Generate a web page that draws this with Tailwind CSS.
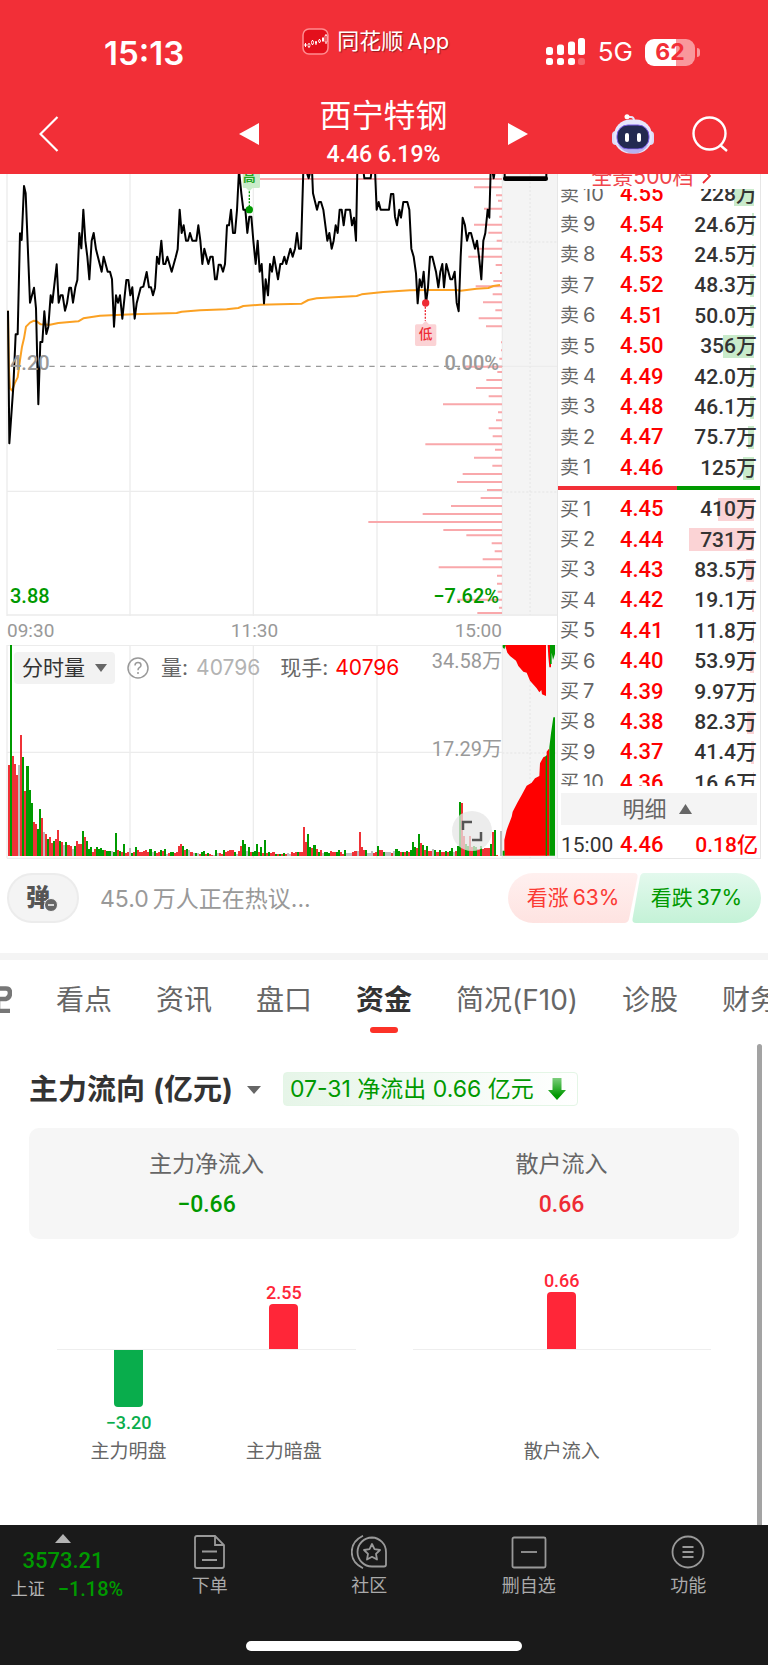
<!DOCTYPE html>
<html lang="zh-CN">
<head>
<meta charset="utf-8">
<meta name="viewport" content="width=device-width, initial-scale=1">
<title>西宁特钢 4.46 6.19%</title>
<script src="https://cdn.jsdelivr.net/npm/@tailwindcss/browser@4"></script>
</head>
<body class="bg-white text-[#333] font-['Inter','Noto_Sans_CJK_SC',sans-serif]">
<div class="relative flex min-h-screen flex-col overflow-hidden">

<!-- Header -->
<header class="bg-[#f22f37] text-white">
  <div class="flex h-[88px] pl-[104px] pr-[68px]">
    <div class="mt-[33px] text-[33px] leading-10 font-semibold">15:13</div>
    <div class="mt-[25px] ml-[118px] flex h-8 items-center gap-2">
      <svg class="size-[27px]" viewBox="0 0 27 27" fill="none"><rect x="1" y="1" width="25" height="25" rx="6" fill="#e4101c" stroke="#ff8c90" stroke-width="1.5"/><path d="M3.5 15v4M7 15v5M10.500 12v5M14 13v4M17.500 11v4M21 9v5M24 6v10" stroke="#fff" stroke-width="1"/><path d="M2.500 16h2v2h-2zM13 13.500h2v2h-2zM20 10h2v3h-2z" fill="#fff"/><path d="M6 16h2v2.500H6zM9.500 13h2v3h-2zM16.500 12h2v2h-2zM23 7.500h2v6.500h-2z" fill="#e4101c" stroke="#fff" stroke-width=".7"/></svg>
      <span class="text-[22px] leading-8 text-shadow-[1px_1px_1px_rgba(0,0,0,0.4)]">同花顺<span class="ml-1">App</span></span>
    </div>
    <div class="mt-8 ml-auto flex h-10 items-center gap-[12px]">
      <svg class="h-7 w-[40px]" viewBox="0 0 40 28" fill="#fff"><rect x="0" y="9" width="7" height="8" rx="2.500"/><rect x="11" y="6.500" width="7" height="10.500" rx="2.500"/><rect x="22" y="3.500" width="7" height="13.500" rx="2.500"/><rect x="32" y="0" width="7" height="17" rx="2.500"/><rect x="0" y="20" width="7" height="7" rx="2.500"/><rect x="11" y="20" width="7" height="7" rx="2.500"/><rect x="22" y="20" width="7" height="7" rx="2.500"/><rect x="32" y="20" width="7" height="7" rx="2.500" opacity=".25"/></svg>
      <span class="text-[26px] leading-8">5G</span>
      <div class="flex items-center gap-[2px]">
        <div class="flex h-[27px] w-[50px] items-center justify-center rounded-[9px] bg-linear-to-r from-white from-62% to-[#f9989c] to-62% text-[23px] leading-[27px] font-bold text-[#f22f37]">62</div>
        <div class="h-[9px] w-[3px] rounded-r-full bg-[#f9989c]"></div>
      </div>
    </div>
  </div>
  <nav class="grid h-[86px] grid-cols-[1fr_auto_1fr] items-center pt-[6px] pr-[40px] pb-[1px] pl-[39px]">
    <button aria-label="返回" class="justify-self-start"><svg class="h-[36px] w-5" viewBox="0 0 20 36" fill="none" stroke="#fff" stroke-width="2.200"><path d="M18.500 1 1.500 18l17 17"/></svg></button>
    <div class="flex items-center gap-[60px]">
      <button aria-label="上一只"><svg class="h-[22px] w-5" viewBox="0 0 20 22" fill="#fff"><path d="M0 11 20 0v22z"/></svg></button>
      <div class="text-center">
        <h1 class="text-[32px] leading-[42px]">西宁特钢</h1>
        <p class="font-['Roboto',sans-serif] text-[23px] leading-[36px] font-medium">4.46 6.19%</p>
      </div>
      <button aria-label="下一只"><svg class="h-[22px] w-5" viewBox="0 0 20 22" fill="#fff"><path d="M20 11 0 0v22z"/></svg></button>
    </div>
    <div class="flex items-center gap-[37px] justify-self-end">
      <button aria-label="智能助手"><svg class="h-[40px] w-[44px]" viewBox="0 0 44 40"><path d="M16 3h4q3 0 3 4" fill="none" stroke="#e6e6fa" stroke-width="2"/><circle cx="16" cy="2.800" r="2.500" fill="#fff"/><rect x="1" y="17" width="8" height="14" rx="4" fill="#dcdcf6"/><rect x="35" y="17" width="8" height="14" rx="4" fill="#dcdcf6"/><rect x="3" y="5.500" width="38" height="34" rx="16" fill="#e7e6fb"/><path d="M6 30q6 9 16 9.500T38 30q-6 6-16 6T6 30z" fill="#b7b2ee"/><rect x="6" y="11" width="32" height="24" rx="11" fill="#232950" stroke="#7c5ce6" stroke-width="1"/><rect x="14" y="19" width="4" height="9" rx="2" fill="#fff"/><rect x="26" y="19" width="4" height="9" rx="2" fill="#fff"/></svg></button>
      <button aria-label="搜索"><svg class="size-9" viewBox="0 0 36 36" fill="none" stroke="#fff" stroke-width="2.400"><circle cx="17.500" cy="17.500" r="16"/><path d="m28 29 7 6"/></svg></button>
    </div>
  </nav>
</header>

<!-- Quote area -->
<section class="flex h-[685px]">
  <div class="flex min-w-0 flex-1 flex-col">
    <div class="relative h-[442px] font-['Roboto',sans-serif] text-[20px] leading-6 font-medium">
      <svg class="h-full w-full" viewBox="0 12 1671 1326" preserveAspectRatio="none" fill="none">
        <rect x="1509" y="12" width="162" height="1326" fill="#f4f4f4"/>
        <path d="M21 12V1338M390 12V1338M760 12V1338M1131 12V1338M1507 12V1338M21 214H1507M1507 589H1671M21 964H1507M21 1335H1671" stroke="#ececec" stroke-width="4"/>
        <path d="M1590 12V1335M1507 216H1671M1507 966H1671" stroke="#e9e9e9" stroke-width="4" stroke-dasharray="6 6"/>
        <path d="M148 589H1507" stroke="#999" stroke-width="3.500" stroke-dasharray="16 16"/>
        <path stroke="#f9a8ab" stroke-width="6" d="M765 27H1506M1422 52H1506M1488 76H1506M1494 92H1506M1452 116H1506M1498 140H1506M1422 164H1506M1465 188H1506M1490 212H1506M1430 236H1506M1405 260H1506M1487 285H1506M1500 309H1506M1480 333H1506M1427 349H1506M1478 373H1506M1449 397H1506M1486 421H1506M1436 445H1506M1458 469H1506M1503 517H1506M1503 541H1506M1498 566H1506M1393 590H1506M1492 606H1506M1459 630H1506M1428 654H1506M1466 679H1506M1329 703H1506M1494 727H1506M1488 751H1506M1466 775H1506M1478 799H1506M1276 823H1506M1485 839H1506M1422 863H1506M1477 887H1506M1388 912H1506M1371 936H1506M1461 960H1506M1442 984H1506M1353 1008H1506M1268 1032H1506M1105 1056H1506M1330 1080H1506M1399 1096H1506M1475 1120H1506M1484 1144H1506M1448 1168H1506M1316 1192H1506M1491 1217H1506M1491 1241H1506M1493 1265H1506M1371 1289H1506M1497 1313H1506M1432 1329H1506"/>
        <polyline stroke="#fba123" stroke-width="6" stroke-linejoin="round" points="24,422 27,600 30,655 36,662 44,640 53,622 60,570 66,530 72,505 78,470 90,458 102,452 110,454 122,463 150,464 175,459 235,454 250,445 300,437 400,433 530,429 545,425 600,421 680,418 715,414 730,408 780,404 840,403 905,401 925,390 950,385 1070,378 1085,373 1150,366 1230,361 1290,360 1370,360 1382,362 1430,356 1465,354 1480,348 1500,345"/>
        <polyline stroke="#000" stroke-width="6" stroke-linejoin="round" points="24,422 28,820 40,650 47,493 53,493 60,190 65,210 72,48 77,70 90,398 102,353 108,415 115,703 121,516 127,516 133,424 139,492 145,470 152,376 157,398 170,283 176,398 182,376 188,376 195,422 201,400 208,353 213,353 219,398 226,352 232,330 238,189 244,235 250,119 256,212 262,260 268,328 275,212 281,189 288,238 305,305 311,260 323,305 330,305 336,328 342,470 348,376 354,398 360,376 367,446 379,330 385,330 391,376 397,352 404,446 410,400 422,353 430,350 440,306 447,352 453,352 459,376 465,353 471,260 477,282 484,212 490,282 496,282 502,260 515,305 527,262 533,238 539,119 545,189 551,166 558,212 564,212 570,189 577,212 589,212 595,166 601,212 607,282 613,236 625,282 631,260 638,260 645,328 650,328 656,284 662,284 669,305 675,282 681,166 687,166 693,119 699,189 705,189 711,120 717,0 724,70 730,119 736,119 742,189 748,140 754,140 760,212 767,282 773,212 779,305 785,282 792,400 797,328 804,376 810,282 816,305 822,260 834,328 841,282 847,282 853,260 859,282 871,236 878,260 885,236 891,189 897,236 903,236 910,0 918,0 926,25 932,0 936,0 939,70 951,119 957,96 963,96 970,119 982,212 988,189 995,236 1001,212 1007,166 1013,189 1019,119 1025,119 1031,166 1037,119 1050,119 1056,166 1062,143 1068,212 1072,0 1090,0 1093,25 1112,25 1115,0 1125,0 1130,119 1136,96 1142,119 1167,119 1173,72 1180,72 1185,140 1191,166 1198,119 1203,143 1210,96 1222,96 1228,119 1234,236 1241,260 1248,310 1253,400 1259,328 1265,352 1271,305 1278,400 1284,352 1290,260 1297,260 1308,305 1315,352 1321,305 1327,282 1332,352 1339,282 1351,328 1357,328 1364,305 1370,398 1376,424 1382,260 1388,143 1395,166 1401,212 1407,189 1413,189 1419,212 1425,236 1431,212 1437,260 1444,328 1450,212 1456,189 1463,119 1468,143 1472,0 1477,0 1481,25 1485,0"/>
        <path d="M1514 0V26H1639V0" stroke="#000" stroke-width="6"/><path d="M1516 26H1637" stroke="#000" stroke-width="14" stroke-linecap="round"/>
        <path d="M728 0H780V50Q780 54 776 54H758L748 64L738 54H732Q728 54 728 50Z" fill="#c9ecc9"/>
        <path d="M748 64V110" stroke="#090" stroke-width="4" stroke-dasharray="6 4"/><circle cx="748" cy="119" r="11" fill="#090"/>
        <text x="748" y="34" text-anchor="middle" font-size="38" font-weight="700" fill="#1fa51f" font-family="Noto Sans CJK SC">高</text>
        <path d="M1276 410V452" stroke="#ee2b34" stroke-width="4" stroke-dasharray="6 4"/><circle cx="1277" cy="399" r="11" fill="#ee2b34"/>
        <path d="M1267 463 1277 452 1287 463H1305Q1309 463 1309 468V523Q1309 528 1304 528H1250Q1245 528 1245 523V468Q1245 463 1250 463Z" fill="#fbd3d5"/>
        <text x="1277" y="508" text-anchor="middle" font-size="41" font-weight="500" fill="#ee2b34" font-family="Noto Sans CJK SC">低</text>
      </svg>
      <span class="absolute top-[177px] left-[10px] text-[#999]">4.20</span>
      <span class="absolute top-[177px] right-[58px] text-[#999]">0.00%</span>
      <span class="absolute top-[410px] left-[10px] text-[#090]">3.88</span>
      <span class="absolute top-[410px] right-[58px] text-[#090]">−7.62%</span>
    </div>
    <div class="flex h-[29px] items-center justify-between pr-[55px] pl-[7px] font-['Roboto',sans-serif] text-[19px] leading-6 text-[#999]">
      <span>09:30</span><span>11:30</span><span>15:00</span>
    </div>
    <div class="relative h-[214px]">
      <svg class="h-full w-full" viewBox="0 15 1671 642" preserveAspectRatio="none" fill="none">
        <rect x="1509" y="15" width="162" height="638" fill="#f4f4f4"/>
        <path d="M21 16H1671M21 15V655M390 15V655M760 15V655M1131 15V655M1507 15V655M21 337H1507M21 655H1671" stroke="#ececec" stroke-width="4"/>
        <path d="M1590 15V655M1507 339H1671" stroke="#e9e9e9" stroke-width="4" stroke-dasharray="6 6"/>
        <g id="volume" shape-rendering="crispEdges"></g>
        <path fill="#f00" d="M1515 15 1522 38 1530 48 1548 62 1555 78 1570 95 1580 98 1590 122 1610 145 1618 157 1624 150 1626 163 1638 168V15ZM1643 15 1645 50 1648 82H1653V15Z"/>
        <path fill="#090" d="M1508 15H1517L1513 28 1508 22ZM1650 15 1650 72H1655V38L1659 60 1665 42V15Z"/>
        <path fill="#f00" d="M1513 647V600L1520 570 1535 530 1538 515 1552 488 1565 465 1580 437 1595 428 1605 415 1618 408 1620 370 1630 352 1640 347V335L1648 325V647Z"/>
        <path fill="#090" d="M1637 349 1641 345V647H1637ZM1648 322 1653 280 1660 232H1665V647H1648ZM1508 632H1514V647H1508Z"/>
      </svg>
      <div class="absolute top-[7px] left-[14px] flex h-8 items-center text-[21px] leading-8 whitespace-nowrap">
        <button class="flex h-8 items-center gap-[10px] rounded-[4px] bg-[#f2f2f2] px-[8px]">分时量<svg class="h-2 w-3" viewBox="0 0 12 8" fill="#666"><path d="M0 0h12L6 8z"/></svg></button>
        <button aria-label="说明" class="ml-[12px]"><svg class="size-[22px]" viewBox="0 0 22 22" fill="none" stroke="#999" stroke-width="1.500"><circle cx="11" cy="11" r="10"/><path d="M8 8.500q0-3 3-3t3 2.700q0 1.500-1.700 2.500-1.300.9-1.300 2.500"/><path d="M11 15v2"/></svg></button>
        <span class="ml-[12px] text-[#666]">量:</span><span class="ml-[8px] text-[#b3b3b3]">40796</span>
        <span class="ml-[20px] text-[#666]">现手:</span><span class="ml-[7px] text-[#f00]">40796</span>
      </div>
      <span class="absolute top-[4px] right-[55px] font-['Roboto','Noto_Sans_CJK_SC',sans-serif] text-[20px] leading-6 text-[#999]">34.58万</span>
      <span class="absolute top-[92px] right-[55px] font-['Roboto','Noto_Sans_CJK_SC',sans-serif] text-[20px] leading-6 text-[#999]">17.29万</span>
      <button aria-label="全屏" class="absolute right-[65px] bottom-[8px] flex size-10 items-center justify-center rounded-full bg-[#e6e6e6]/75"><svg class="size-[22px]" viewBox="0 0 22 22" fill="none" stroke="#555" stroke-width="2.500"><path d="M2 10V2h9M20 12v8h-9"/></svg></button>
    </div>
  </div>

  <!-- Order book -->
  <div class="flex w-[211px] flex-col pr-[7px]">
    <div class="flex flex-1 flex-col border-x border-b border-[#e6e6e6]">
      <a href="#depth" class="flex h-[15px] items-end justify-center gap-2 overflow-hidden pr-4 text-[21px] leading-[25px] text-[#f0454c]"><span>全景500档</span><svg class="mb-[5px] h-[16px] w-[9px] shrink-0" viewBox="0 0 9 16" fill="none" stroke="#ee2b34" stroke-width="1.800"><path d="m1 1 7 7-7 7"/></svg></a>
      <div class="flex h-[294px] flex-col justify-end overflow-hidden">
        <table class="h-[304px] w-full shrink-0 table-fixed"><tbody id="asks"></tbody></table>
      </div>
      <div class="mt-[3px] flex h-[4px]"><div class="w-[59%] bg-[#f22f37]"></div><div class="flex-1 bg-[#090]"></div></div>
      <div class="mt-[4px] h-[292px] overflow-hidden">
        <table class="h-[304px] w-full table-fixed"><tbody id="bids"></tbody></table>
      </div>
      <button class="mx-[3px] mt-[7px] flex h-8 items-center justify-center gap-3 bg-[#f4f4f4] pr-1 text-[22px] leading-8 text-[#666]">明细<svg class="h-[10px] w-[13px]" viewBox="0 0 13 10" fill="#666"><path d="M6.500 0 13 10H0z"/></svg></button>
      <div class="flex flex-1 items-center pt-[6px] pr-[2px] pl-[3px] font-['Roboto','Noto_Sans_CJK_SC',sans-serif] text-[22px] leading-6 font-medium"><span class="w-[59px] text-[21px] font-normal">15:00</span><span class="text-[#f00]">4.46</span><span class="ml-auto text-[21px] text-[#f00]">0.18亿</span></div>
    </div>
  </div>
</section>

<!-- Discussion -->
<section class="flex h-[94px] items-start px-[7px] pt-[14px]">
  <button aria-label="弹幕" class="relative flex h-[50px] w-[72px] items-center justify-center rounded-full border-2 border-[#ececec] bg-[#f4f4f4] pr-[10px] text-[24px] leading-8 font-black text-[#555]">弹<svg class="absolute right-[19px] bottom-[9px] size-[14px]" viewBox="0 0 14 14"><circle cx="7" cy="7" r="6.500" fill="#666" stroke="#f4f4f4"/><path d="M4 7h6" stroke="#fff" stroke-width="1.500"/></svg></button>
  <a href="#discuss" class="ml-[21px] text-[23px] leading-[52px] text-[#999]">45.0<span class="ml-1">万人正在热议...</span></a>
  <div class="ml-auto flex text-[21px] leading-[50px]">
    <button class="relative h-[50px] w-[130px] text-[#fb3a34]"><svg class="absolute inset-0 h-full w-full" viewBox="0 0 130 50"><defs><linearGradient id="up" x2="0" y2="1"><stop stop-color="#fff0ef"/><stop offset="1" stop-color="#fee3e1"/></linearGradient></defs><path d="M25 0H126Q130 0 129.500 4L121 46Q120 50 116 50H25A25 25 0 0 1 25 0Z" fill="url(#up)"/></svg><span class="relative">看涨<span class="ml-1">63%</span></span></button>
    <button class="relative -ml-[6px] h-[50px] w-[129px] text-[#090]"><svg class="absolute inset-0 h-full w-full" viewBox="0 0 129 50"><defs><linearGradient id="down" x2="0" y2="1"><stop stop-color="#e3f9ed"/><stop offset="1" stop-color="#c4f2d7"/></linearGradient></defs><path d="M12 0H104A25 25 0 0 1 104 50H4Q0 50 .5 46L8 4Q9 0 12 0Z" fill="url(#down)"/></svg><span class="relative">看跌<span class="ml-1">37%</span></span></button>
  </div>
</section>
<div class="h-[7px] bg-[#f4f4f4]"></div>

<!-- Tabs -->
<nav class="flex h-[76px] items-start gap-11 overflow-hidden pt-[19px] text-[28px] leading-[42px] whitespace-nowrap text-[#666]">
  <svg class="mt-[7px] h-[27px] w-3 shrink-0" viewBox="0 0 12 27" fill="none" stroke="#777" stroke-width="4.500"><path d="M-4 2.500H6Q10 2.500 10 7t-4 6H-2V25H10"/></svg>
  <a href="#views">看点</a><a href="#news">资讯</a><a href="#tape">盘口</a>
  <a href="#funds" aria-current="page" class="flex flex-col items-center font-bold text-[#333]">资金<span class="mt-[6px] h-[6px] w-[28px] rounded-[3px] bg-[#fc3228]"></span></a>
  <a href="#f10">简况(F10)</a><a href="#diagnosis">诊股</a><a href="#finance">财务</a>
</nav>

<!-- Capital flow -->
<main class="relative flex-1 pt-[36px]">
  <div class="absolute top-2 right-[6px] bottom-0 w-[5px] rounded-t-full bg-[#a3a3a3]"></div>
  <div class="flex h-[34px] items-center pl-[29px] whitespace-nowrap">
    <button class="flex items-center gap-[14px] pt-[2px] text-[29px] leading-[34px] font-bold"><span>主力流向<span class="ml-2">(亿元)</span></span><svg class="h-2 w-[14px]" viewBox="0 0 14 8" fill="#666"><path d="M0 0h14L7 8z"/></svg></button>
    <div class="ml-[22px] flex h-[34px] items-center gap-[14px] rounded-[4px] border border-[#e4f6e6] bg-linear-to-r from-[#e6f5e8] to-white pr-[11px] pl-[6px] text-[23px] leading-8 text-[#090]">07-31 净流出 0.66 亿元<svg class="h-[22px] w-[18px]" viewBox="0 0 18 22"><defs><linearGradient id="fall" x2="0" y2="1"><stop stop-color="#7dce7d"/><stop offset=".8" stop-color="#090"/></linearGradient></defs><path d="M4.500 0h9v12H18L9 22 0 12h4.500z" fill="url(#fall)"/></svg></div>
  </div>
  <dl class="mx-[29px] mt-[22px] grid h-[111px] grid-cols-2 rounded-[10px] bg-[#f6f6f6] pt-4 text-center">
    <div><dt class="text-[23px] leading-10 text-[#666]">主力净流入</dt><dd class="font-['Roboto',sans-serif] text-[23px] leading-[42px] font-medium text-[#090]">−0.66</dd></div>
    <div><dt class="text-[23px] leading-10 text-[#666]">散户流入</dt><dd class="font-['Roboto',sans-serif] text-[23px] leading-[42px] font-medium text-[#ee2b34]">0.66</dd></div>
  </dl>
  <div class="mt-[27px] grid grid-cols-2 gap-[45px] px-[51px] text-center font-['Roboto','Noto_Sans_CJK_SC',sans-serif]">
    <div>
      <div class="grid h-[83px] grid-cols-2 items-end"><span></span><div class="flex flex-col items-center text-[18px] leading-[22px] font-medium text-[#ff2638]">2.55<div class="h-[45px] w-[29px] rounded-t-[4px] bg-[#ff2638]"></div></div></div>
      <div class="mx-[6px] h-px bg-[#eee]"></div>
      <div class="grid h-[88px] grid-cols-2 items-start"><div class="flex flex-col items-center gap-[5px] text-[18px] leading-[22px] font-medium text-[#09ad4c]"><div class="h-[57px] w-[29px] rounded-b-[4px] bg-[#09ad4c]"></div>−3.20</div></div>
      <div class="grid grid-cols-2 text-[19px] leading-[28px] text-[#666]"><span>主力明盘</span><span>主力暗盘</span></div>
    </div>
    <div>
      <div class="flex h-[83px] flex-col items-center justify-end text-[18px] leading-[22px] font-medium text-[#ff2638]">0.66<div class="h-[57px] w-[29px] rounded-t-[4px] bg-[#ff2638]"></div></div>
      <div class="mx-[6px] h-px bg-[#eee]"></div>
      <div class="h-[88px]"></div>
      <div class="text-[19px] leading-[28px] text-[#666]">散户流入</div>
    </div>
  </div>
</main>

<!-- Bottom bar -->
<footer class="flex h-[140px] flex-col bg-[#1a1a1a] text-[#aaa]">
  <div class="flex">
    <button class="flex w-[130px] flex-col items-center pt-[9px] pr-1 font-['Roboto','Noto_Sans_CJK_SC',sans-serif] font-medium text-[#090]">
      <svg class="h-[9px] w-4" viewBox="0 0 16 9" fill="#b3b3b3"><path d="M8 0 16 9H0z"/></svg>
      <span class="mt-[4px] text-[22px] leading-[28px]">3573.21</span>
      <span class="flex gap-[13px] pl-[8px] text-[20px] leading-[28px]"><span class="text-[17px] font-normal text-[#b3b3b3]">上证</span>−1.18%</span>
    </button>
    <div class="grid flex-1 grid-cols-4 text-[18px] leading-6">
      <button class="flex flex-col items-center gap-[5px] pt-[10px]"><svg class="h-[34px] w-[36px]" viewBox="0 0 36 34" fill="none" stroke="#999" stroke-width="1.800"><path d="M23 1H5Q3 1 3 3V31q0 2 2 2H30q2 0 2-2V10zV10H32M10 16.500H25M10 25H25"/></svg>下单</button>
      <button class="flex flex-col items-center gap-[5px] pt-[10px]"><svg class="h-[34px] w-[36px]" viewBox="0 0 36 34" fill="none" stroke="#999" stroke-width="1.800"><path d="M21 2.500A14.500 14.500 0 0 0 21 31.500H33q2 0 2-2V17A14.500 14.500 0 0 0 21 2.500ZM12 .800C-3 8-3 26 12 33.200"/><path d="m21 9 2.500 5.200 5.500.8-4 3.900 1 5.600-5-2.700-5 2.700 1-5.600-4-3.900 5.500-.8z" stroke-linejoin="round"/></svg>社区</button>
      <button class="flex flex-col items-center gap-[5px] pt-[10px]"><svg class="h-[34px] w-[36px]" viewBox="0 0 36 34" fill="none" stroke="#999" stroke-width="1.800"><rect x="1.500" y="2.500" width="33" height="30" rx="1.500"/><path d="M10 17H26"/></svg>删自选</button>
      <button class="flex flex-col items-center gap-[5px] pt-[10px]"><svg class="h-[34px] w-[36px]" viewBox="0 0 36 34" fill="none" stroke="#999" stroke-width="1.800"><circle cx="18" cy="17" r="15.500"/><path d="M12.500 12H23.500M12.500 17H23.500M12.500 22H23.500"/></svg>功能</button>
    </div>
  </div>
  <div class="mt-auto mb-[14px] h-[10px] w-[276px] self-center rounded-full bg-white"></div>
</footer>
</div>

<script>
  // Order book rows: level, price, volume, depth bar width in px.
  const asks = [[10,'4.55','228万',20],[9,'4.54','24.6万',2],[8,'4.53','24.5万',2],[7,'4.52','48.3万',4],[6,'4.51','50.0万',4],[5,'4.50','356万',31],[4,'4.49','42.0万',4],[3,'4.48','46.1万',4],[2,'4.47','75.7万',6],[1,'4.46','125万',11]];
  const bids = [[1,'4.45','410万',36],[2,'4.44','731万',65],[3,'4.43','83.5万',8],[4,'4.42','19.1万',2],[5,'4.41','11.8万',1],[6,'4.40','53.9万',4],[7,'4.39','9.97万',1],[8,'4.38','82.3万',7],[9,'4.37','41.4万',3],[10,'4.36','16.6万',1]];
  const row = (side, tint) => ([level, price, volume, width]) => `<tr>
    <th scope="row" class="w-[62px] p-0 pl-[2px] text-left align-middle text-[19px] leading-6 font-normal whitespace-nowrap text-[#666]">${side}<span class="ml-[4px] text-[20px]">${level}</span></th>
    <td class="w-[50px] p-0 text-left align-middle font-['Roboto',sans-serif] text-[22px] leading-6 font-medium text-[#f00]">${price}</td>
    <td class="relative p-0 pr-[3px] text-right align-middle font-['Roboto','Noto_Sans_CJK_SC',sans-serif] text-[21px] leading-6 font-medium whitespace-nowrap"><span class="absolute top-[4px] right-[6px] h-[23px] ${tint}" style="width:${width}px"></span><span class="relative">${volume}</span></td></tr>`;
  document.getElementById('asks').innerHTML = asks.map(row('卖', 'bg-[#c9ebcb]')).join('');
  document.getElementById('bids').innerHTML = bids.map(row('买', 'bg-[#fbd3d5]')).join('');

  // One bar per minute: colour letter and height.
  const bars = 'r271 g631 r300 r275 r243 x273 r363 g296 r193 g268 g196 g158 r101 r96 g80 g141 r113 x72 r66 g51 r57 r38 g45 r51 r76 g43 r40 x32 g40 r33 r28 x20 g28 r43 r36 r36 g73 r56 g43 g20 g26 r12 r20 g26 g20 g22 g16 r16 g14 g14 x14 g12 g67 r16 g14 r12 g36 r8 r12 x23 g8 r10 g25 r18 r10 r10 r14 r16 r12 g20 x10 g14 r8 r12 g16 r14 g20 x6 r8 g11 g11 r8 r10 r30 r35 g28 r16 g20 x16 r12 x8 g8 x8 r4 g10 g14 r6 g8 r6 r2 x2 g16 x8 r8 r6 g16 r12 r14 r18 r18 g10 x6 r14 r30 g46 g34 x14 g25 r10 g10 g14 g36 r12 g26 r8 g46 r8 g12 r8 r10 g6 r6 g5 r6 g8 r5 x7 x6 r10 r9 r12 g10 r12 r10 r86 r40 g64 g26 r22 g32 r20 g12 r16 x8 g10 g12 g8 r14 r12 r12 g10 g18 r10 r6 g18 x8 x8 x8 r12 r14 x14 r70 r25 r18 g18 x8 x8 x14 r8 r10 g30 r18 r16 g12 x12 x12 x10 r8 x14 g20 g14 r10 g12 r10 g14 r10 g16 g40 g25 r24 g65 r38 g32 r18 g28 r14 r14 x20 g16 r12 g16 r10 r12 g14 r10 g14 g22 x10 r14 g28 g160 r157 r60 g35 g30 r60 r26 g30 g26 r20 g30 r20 r24 r22 r24 g35 r70 g78 r2 x0 x74'.split(' ');
  const tone = { r: '#ef3237', g: '#009a00', x: '#bbb' };
  document.getElementById('volume').innerHTML = bars.map((b, i) => {
    const h = +b.slice(1);
    return `<rect x="${(24 + i * 6.15).toFixed(1)}" y="${647 - h}" width="6.2" height="${h}" fill="${tone[b[0]]}"/>`;
  }).join('');
</script>
</body>
</html>
